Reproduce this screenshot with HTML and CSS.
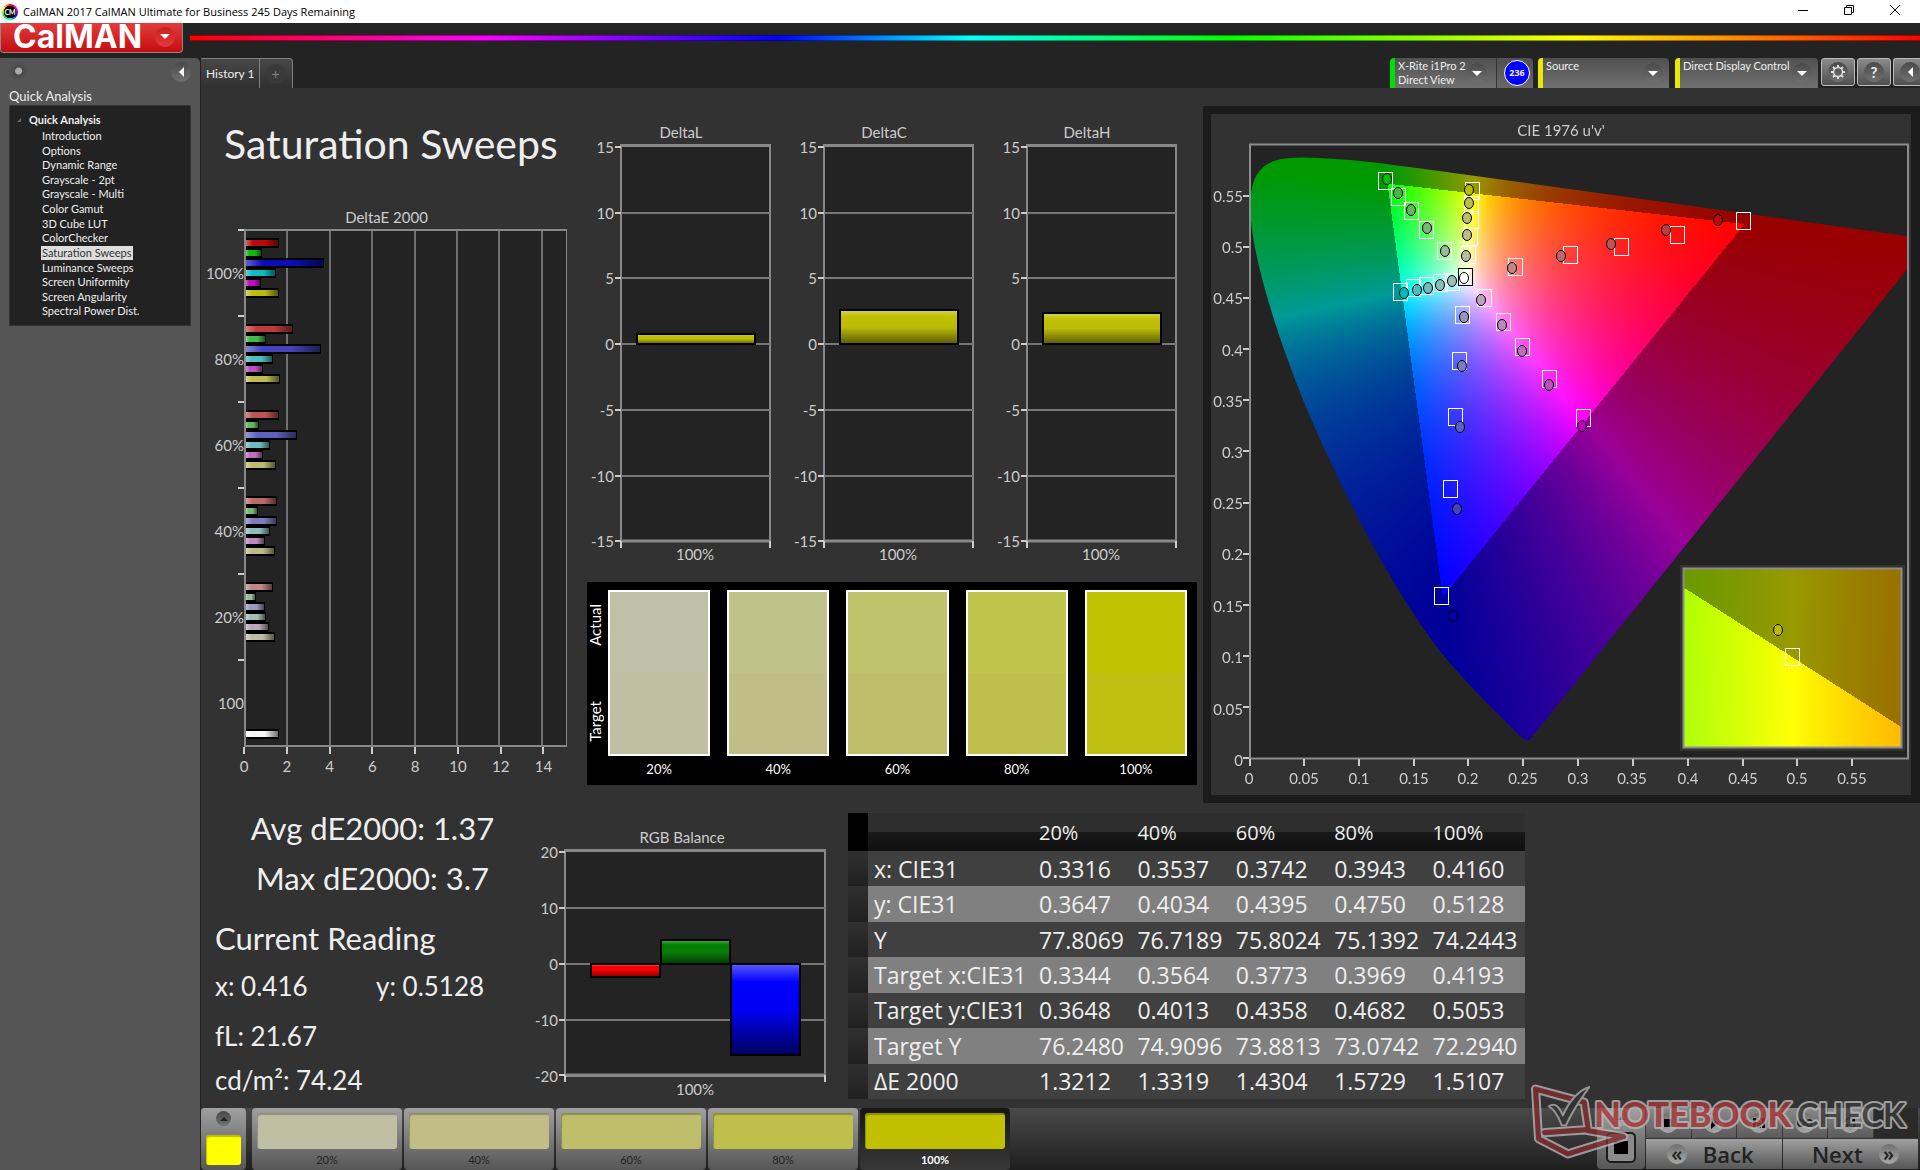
FILE: index.html
```html
<!DOCTYPE html>
<html lang="en">
<head>
<meta charset="utf-8">
<meta name="viewport" content="width=device-width, initial-scale=1">
<title>CalMAN 2017 CalMAN Ultimate for Business</title>
<link rel="stylesheet" href="styles.css">
</head>
<body>
<header class="titlebar">
  <span class="app-icon">CM</span>
  <span class="app-name">CalMAN 2017 CalMAN Ultimate for Business 245 Days Remaining</span>
  <div class="window-buttons">
    <button type="button" aria-label="Minimize"><svg width="12" height="12" viewBox="0 0 12 12"><path d="M1 6.500h10"/></svg></button>
    <button type="button" aria-label="Restore"><svg width="12" height="12" viewBox="0 0 12 12"><path d="M1.500 3.500h7v7h-7zM3.500 3.500v-2h7v7h-2"/></svg></button>
    <button type="button" aria-label="Close"><svg width="12" height="12" viewBox="0 0 12 12"><path d="M1 1l10 10M11 1L1 11"/></svg></button>
  </div>
</header>

<div class="brandbar">
  <button type="button" class="brand">CalMAN <span class="round"><i class="arrow down"></i></span></button>
  <div class="rainbow"></div>
</div>

<div class="workspace">
  <aside class="sidebar">
    <div class="sidebar-tools">
      <span class="round pin"></span>
      <button type="button" class="round" aria-label="Collapse"><i class="arrow left"></i></button>
    </div>
    <h2>Quick Analysis</h2>
    <nav class="tree">
      <a href="#" class="tree-root">Quick Analysis</a>
      <ul>
        <li><a href="#">Introduction</a></li>
        <li><a href="#">Options</a></li>
        <li><a href="#">Dynamic Range</a></li>
        <li><a href="#">Grayscale - 2pt</a></li>
        <li><a href="#">Grayscale - Multi</a></li>
        <li><a href="#">Color Gamut</a></li>
        <li><a href="#">3D Cube LUT</a></li>
        <li><a href="#">ColorChecker</a></li>
        <li><a href="#" class="current" aria-current="page">Saturation Sweeps</a></li>
        <li><a href="#">Luminance Sweeps</a></li>
        <li><a href="#">Screen Uniformity</a></li>
        <li><a href="#">Screen Angularity</a></li>
        <li><a href="#">Spectral Power Dist.</a></li>
      </ul>
    </nav>
  </aside>

  <main class="main">
    <div class="toolbar">
      <div class="tabs">
        <button type="button" class="tab">History 1</button>
        <button type="button" class="tab add" aria-label="Add history"><span class="round">+</span></button>
      </div>
      <div class="devices">
        <button type="button" class="device meter"><span class="device-name">X-Rite i1Pro 2<br>Direct View</span><span class="round"><i class="arrow down"></i></span></button>
        <span class="meter-count"><b>236</b></span>
        <button type="button" class="device source"><span class="device-name">Source</span><span class="round"><i class="arrow down"></i></span></button>
        <button type="button" class="device display"><span class="device-name">Direct Display Control</span><span class="round"><i class="arrow down"></i></span></button>
        <button type="button" class="tool" aria-label="Settings"><span class="round"><svg width="16" height="16" viewBox="0 0 16 16"><circle cx="8" cy="8" r="4.500" fill="none" stroke="#ddd" stroke-width="1.500"/><path d="M8 1v2.500M8 12.500V15M1 8h2.500M12.500 8H15M3 3l2 2M11 11l2 2M13 3l-2 2M5 11l-2 2" stroke="#ddd" stroke-width="2"/></svg></span></button>
        <button type="button" class="tool" aria-label="Help"><span class="round">?</span></button>
        <button type="button" class="tool last" aria-label="Collapse toolbar"><span class="round"><i class="arrow left"></i></span></button>
      </div>
    </div>

    <div class="content">
      <div class="upper">
        <section class="sweep">
          <h1>Saturation Sweeps</h1>
          <h3>DeltaE 2000</h3>
          <div class="de-chart">
            <div class="de-labels"><span>100%</span><span>80%</span><span>60%</span><span>40%</span><span>20%</span><span>100</span></div>
            <div class="de-plot">
              <div class="group"><i class="r100" style="--v:1.55"></i><i class="g100" style="--v:.75"></i><i class="b100" style="--v:3.7"></i><i class="c100" style="--v:1.4"></i><i class="m100" style="--v:.7"></i><i class="y100" style="--v:1.55"></i></div>
              <div class="group"><i class="r80" style="--v:2.2"></i><i class="g80" style="--v:.95"></i><i class="b80" style="--v:3.56"></i><i class="c80" style="--v:1.27"></i><i class="m80" style="--v:.8"></i><i class="y80" style="--v:1.6"></i></div>
              <div class="group"><i class="r60" style="--v:1.55"></i><i class="g60" style="--v:.6"></i><i class="b60" style="--v:2.4"></i><i class="c60" style="--v:1.13"></i><i class="m60" style="--v:.8"></i><i class="y60" style="--v:1.43"></i></div>
              <div class="group"><i class="r40" style="--v:1.46"></i><i class="g40" style="--v:.55"></i><i class="b40" style="--v:1.46"></i><i class="c40" style="--v:1.13"></i><i class="m40" style="--v:.9"></i><i class="y40" style="--v:1.36"></i></div>
              <div class="group"><i class="r20" style="--v:1.27"></i><i class="g20" style="--v:.47"></i><i class="b20" style="--v:.9"></i><i class="c20" style="--v:.95"></i><i class="m20" style="--v:1.08"></i><i class="y20" style="--v:1.36"></i></div>
              <div class="group end"><i class="white" style="--v:1.55"></i></div>
            </div>
            <div class="de-axis"><span>0</span><span>2</span><span>4</span><span>6</span><span>8</span><span>10</span><span>12</span><span>14</span></div>
          </div>
        </section>

        <section class="middle">
          <div class="deltas">
            <svg class="chart" viewBox="0 0 203 450" role="img" aria-label="DeltaL">
              <defs>
                <linearGradient id="yellow" x2="0" y2="1"><stop offset="0" stop-color="#d2d25a"/><stop offset=".2" stop-color="#c0c000"/><stop offset=".5" stop-color="#bcbc0a"/><stop offset="1" stop-color="#5a5a00"/></linearGradient>
                <linearGradient id="red" x2="0" y2="1"><stop offset="0" stop-color="#ff5050"/><stop offset=".2" stop-color="#f00"/><stop offset=".5" stop-color="#f00000"/><stop offset="1" stop-color="#800000"/></linearGradient>
                <linearGradient id="green" x2="0" y2="1"><stop offset="0" stop-color="#50a850"/><stop offset=".2" stop-color="#008000"/><stop offset=".5" stop-color="#0a7c0a"/><stop offset="1" stop-color="#003c00"/></linearGradient>
                <linearGradient id="blue" x2="0" y2="1"><stop offset="0" stop-color="#5a5aff"/><stop offset=".2" stop-color="#00f"/><stop offset=".5" stop-color="#0000f4"/><stop offset="1" stop-color="#000060"/></linearGradient>
                <g id="delta-frame">
                  <path class="plot" d="M41 25h149v396h-149z"/>
                  <path class="grid" d="M41 93h149M41 158h149M41 224h149M41 290h149M41 356h149"/>
                  <path class="band" d="M40 25.500h151M40 421h151"/>
                  <path class="tick" d="M35 27h6M35 93h6M35 158h6M35 224h6M35 290h6M35 356h6M35 421h6M41 421v7M190 421v7"/>
                  <g class="ylabel"><text x="34" y="33">15</text><text x="34" y="99">10</text><text x="34" y="164">5</text><text x="34" y="230">0</text><text x="34" y="296">-5</text><text x="34" y="362">-10</text><text x="34" y="427">-15</text></g>
                  <text class="label" x="115" y="440">100%</text>
                </g>
              </defs>
              <text class="label" x="101" y="18">DeltaL</text>
              <use href="#delta-frame"/>
              <rect class="bar" x="57" y="214" width="118" height="10" fill="url(#yellow)"/>
            </svg>
            <svg class="chart" viewBox="0 0 203 450" role="img" aria-label="DeltaC">
              <text class="label" x="101" y="18">DeltaC</text>
              <use href="#delta-frame"/>
              <rect class="bar" x="57" y="190" width="118" height="34" fill="url(#yellow)"/>
            </svg>
            <svg class="chart" viewBox="0 0 203 450" role="img" aria-label="DeltaH">
              <text class="label" x="101" y="18">DeltaH</text>
              <use href="#delta-frame"/>
              <rect class="bar" x="57" y="193" width="118" height="31" fill="url(#yellow)"/>
            </svg>
          </div>
          <div class="compare">
            <div class="compare-sides"><span>Actual</span><span>Target</span></div>
            <figure><div class="pair p20"></div><figcaption>20%</figcaption></figure>
            <figure><div class="pair p40"></div><figcaption>40%</figcaption></figure>
            <figure><div class="pair p60"></div><figcaption>60%</figcaption></figure>
            <figure><div class="pair p80"></div><figcaption>80%</figcaption></figure>
            <figure><div class="pair p100"></div><figcaption>100%</figcaption></figure>
          </div>
        </section>

        <section class="cie">
          <canvas id="gamut" width="700" height="681"></canvas>
          <svg class="chart" viewBox="0 0 700 681" role="img" aria-label="CIE 1976 u'v' diagram">
            <defs><rect id="sq" x="-6.500" y="-8.500" width="14" height="17"/><ellipse id="dot" rx="4.500" ry="5.500"/></defs>
            <text class="label" x="350" y="22">CIE 1976 u'v'</text>
            <path class="frame" d="M39 30.500h658v614h-658z"/>
            <path class="tick" d="M39 645v7M93 645v7M148 645v7M203 645v7M257 645v7M312 645v7M367 645v7M422 645v7M477 645v7M532 645v7M586 645v7M641 645v7M32 644h6M32 593h6M32 542h6M32 491h6M32 440h6M32 389h6M32 337h6M32 286h6M32 235h6M32 184h6M32 133h6M32 82h6"/>
            <g class="label"><text x="38" y="670">0</text><text x="93" y="670">0.05</text><text x="148" y="670">0.1</text><text x="203" y="670">0.15</text><text x="257" y="670">0.2</text><text x="312" y="670">0.25</text><text x="367" y="670">0.3</text><text x="421" y="670">0.35</text><text x="477" y="670">0.4</text><text x="532" y="670">0.45</text><text x="586" y="670">0.5</text><text x="641" y="670">0.55</text></g>
            <g class="ylabel"><text x="32" y="652">0</text><text x="32" y="601">0.05</text><text x="32" y="549">0.1</text><text x="32" y="498">0.15</text><text x="32" y="446">0.2</text><text x="32" y="395">0.25</text><text x="32" y="344">0.3</text><text x="32" y="293">0.35</text><text x="32" y="242">0.4</text><text x="32" y="190">0.45</text><text x="32" y="139">0.5</text><text x="32" y="88">0.55</text></g>
            <g class="targets">
              <use href="#sq" x="174" y="67"/><use href="#sq" x="187" y="83"/><use href="#sq" x="200" y="97"/><use href="#sq" x="215" y="116"/><use href="#sq" x="233" y="137"/>
              <use href="#sq" x="261" y="77"/><use href="#sq" x="260" y="91"/><use href="#sq" x="260" y="106"/><use href="#sq" x="259" y="123"/><use href="#sq" x="257" y="141"/>
              <use href="#sq" x="189" y="178"/><use href="#sq" x="202" y="174"/><use href="#sq" x="215" y="172"/><use href="#sq" x="229" y="169"/><use href="#sq" x="241" y="168"/>
              <use href="#sq" x="273" y="184"/><use href="#sq" x="292" y="208"/><use href="#sq" x="311" y="233"/><use href="#sq" x="338" y="265"/><use href="#sq" x="372" y="304"/>
              <use href="#sq" x="251" y="201"/><use href="#sq" x="248" y="247"/><use href="#sq" x="244" y="303"/><use href="#sq" x="239" y="375"/><use href="#sq" x="230" y="482"/>
              <use href="#sq" x="304" y="153"/><use href="#sq" x="359" y="141"/><use href="#sq" x="410" y="133"/><use href="#sq" x="466" y="121"/><use href="#sq" x="532" y="107"/>
              <use href="#sq" x="254" y="163" class="white-target"/>
            </g>
            <g class="readings">
              <use href="#dot" x="176" y="65" class="g100"/><use href="#dot" x="187" y="79" class="g80"/><use href="#dot" x="200" y="96" class="g60"/><use href="#dot" x="216" y="114" class="g40"/><use href="#dot" x="234" y="137" class="g20"/>
              <use href="#dot" x="258" y="76" class="y100"/><use href="#dot" x="258" y="89" class="y80"/><use href="#dot" x="256" y="104" class="y60"/><use href="#dot" x="256" y="121" class="y40"/><use href="#dot" x="255" y="142" class="y20"/>
              <use href="#dot" x="193" y="179" class="c100"/><use href="#dot" x="206" y="176" class="c80"/><use href="#dot" x="217" y="174" class="c60"/><use href="#dot" x="229" y="171" class="c40"/><use href="#dot" x="241" y="167" class="c20"/>
              <use href="#dot" x="371" y="312" class="m100"/><use href="#dot" x="338" y="271" class="m80"/><use href="#dot" x="311" y="237" class="m60"/><use href="#dot" x="291" y="211" class="m40"/><use href="#dot" x="270" y="186" class="m20"/>
              <use href="#dot" x="242" y="502" class="b100"/><use href="#dot" x="246" y="395" class="b80"/><use href="#dot" x="249" y="313" class="b60"/><use href="#dot" x="251" y="252" class="b40"/><use href="#dot" x="253" y="203" class="b20"/>
              <use href="#dot" x="507" y="106" class="r100"/><use href="#dot" x="455" y="116" class="r80"/><use href="#dot" x="400" y="130" class="r60"/><use href="#dot" x="350" y="142" class="r40"/><use href="#dot" x="301" y="154" class="r20"/>
              <use href="#dot" x="253" y="164" class="white"/><use href="#dot" x="567" y="516" class="y100"/>
            </g>
            <path class="frame" d="M472.500 454.500h218v179h-218z"/>
            <g class="targets"><use href="#sq" x="581" y="543"/></g>
          </svg>
        </section>
      </div>

      <div class="lower">
        <section class="stats">
          <p class="big center">Avg dE2000: 1.37</p>
          <p class="big center">Max dE2000: 3.7</p>
          <h2 class="big">Current Reading</h2>
          <p class="xy"><span>x: 0.416</span><span>y: 0.5128</span></p>
          <p class="gap">fL: 21.67</p>
          <p>cd/m²: 74.24</p>
        </section>
        <svg class="chart rgb" viewBox="0 0 318 280" role="img" aria-label="RGB Balance">
          <text class="label" x="152" y="18">RGB Balance</text>
          <path class="plot" d="M35 25h260v226h-260z"/>
          <path class="grid" d="M35 83h260M35 139h260M35 195h260"/>
          <path class="band" d="M34 25.500h262M34 250h262"/>
          <path class="tick" d="M29 27h6M29 83h6M29 139h6M29 195h6M29 250h6M35 250v7M295 250v7"/>
          <g class="ylabel"><text x="28" y="33">20</text><text x="28" y="89">10</text><text x="28" y="145">0</text><text x="28" y="201">-10</text><text x="28" y="257">-20</text></g>
          <rect class="bar" x="61" y="139" width="69" height="13" fill="url(#red)"/>
          <rect class="bar" x="131" y="115" width="69" height="24" fill="url(#green)"/>
          <rect class="bar" x="201" y="139" width="69" height="91" fill="url(#blue)"/>
          <text class="label" x="165" y="270">100%</text>
        </svg>
        <table class="data">
          <thead><tr><th class="handle"></th><th class="name"></th><th>20%</th><th>40%</th><th>60%</th><th>80%</th><th>100%</th></tr></thead>
          <tbody>
            <tr><td class="handle"></td><th>x: CIE31</th><td>0.3316</td><td>0.3537</td><td>0.3742</td><td>0.3943</td><td>0.4160</td></tr>
            <tr><td class="handle"></td><th>y: CIE31</th><td>0.3647</td><td>0.4034</td><td>0.4395</td><td>0.4750</td><td>0.5128</td></tr>
            <tr><td class="handle"></td><th>Y</th><td>77.8069</td><td>76.7189</td><td>75.8024</td><td>75.1392</td><td>74.2443</td></tr>
            <tr><td class="handle"></td><th>Target x:CIE31</th><td>0.3344</td><td>0.3564</td><td>0.3773</td><td>0.3969</td><td>0.4193</td></tr>
            <tr><td class="handle"></td><th>Target y:CIE31</th><td>0.3648</td><td>0.4013</td><td>0.4358</td><td>0.4682</td><td>0.5053</td></tr>
            <tr><td class="handle"></td><th>Target Y</th><td>76.2480</td><td>74.9096</td><td>73.8813</td><td>73.0742</td><td>72.2940</td></tr>
            <tr><td class="handle"></td><th>ΔE 2000</th><td>1.3212</td><td>1.3319</td><td>1.4304</td><td>1.5729</td><td>1.5107</td></tr>
          </tbody>
        </table>
      </div>
    </div>

    <footer class="footer">
      <button type="button" class="current-color" aria-label="Current color"><span class="round"><i class="arrow up"></i></span><span class="chip"></span></button>
      <div class="levels">
        <button type="button" class="level"><span class="chip l20"></span>20%</button>
        <button type="button" class="level"><span class="chip l40"></span>40%</button>
        <button type="button" class="level"><span class="chip l60"></span>60%</button>
        <button type="button" class="level"><span class="chip l80"></span>80%</button>
        <button type="button" class="level active"><span class="chip l100"></span>100%</button>
      </div>
      <div class="transport">
        <button type="button" class="stop" aria-label="Stop"><span class="round"><i class="arrow up"></i></span><svg width="30" height="32" viewBox="0 0 30 32"><rect x="1" y="1" width="28" height="29" rx="4" fill="#8a8a8a" stroke="#1c1c1c" stroke-width="2"/><rect x="8" y="9" width="14" height="13" fill="#000"/></svg></button>
        <div class="steps">
          <button type="button" aria-label="Halt"><span class="round"><svg width="18" height="18" viewBox="0 0 18 18"><path d="M5 5h8v8h-8z"/></svg></span></button>
          <button type="button" aria-label="Play"><span class="round"><svg width="18" height="18" viewBox="0 0 18 18"><path d="M6 3l7 6-7 6z"/></svg></span></button>
          <button type="button" aria-label="Save"><span class="round"><svg width="18" height="18" viewBox="0 0 18 18"><path d="M3 4h3v10H3zM12 4h3v10h-3zM7 9h4v5H7z"/></svg></span></button>
          <button type="button" aria-label="Loop"><span class="round"><svg width="18" height="18" viewBox="0 0 18 18"><path d="M5 6a3 3 0 1 0 0 6c3 0 5-6 8-6a3 3 0 1 1 0 6c-3 0-5-6-8-6z" fill="none" stroke="#222" stroke-width="2"/></svg></span></button>
          <button type="button" aria-label="Refresh"><span class="round"><svg width="18" height="18" viewBox="0 0 18 18"><path d="M4 8a5 5 0 0 1 9-2M14 10a5 5 0 0 1-9 2" fill="none" stroke="#222" stroke-width="2"/><path d="M14 3v5h-5zM4 15v-5h5z"/></svg></span></button>
          <span class="blank"></span>
        </div>
        <div class="pages">
          <button type="button"><span class="round">«</span>Back</button>
          <button type="button">Next<span class="round">»</span></button>
        </div>
      </div>
      <svg class="watermark" viewBox="0 0 384 76" role="img" aria-label="Notebookcheck">
        <g stroke-linejoin="round" stroke-linecap="round">
          <path d="M5 6L53 19L57 46L14 49M5 6L8 55L37 70L92 53L56 47" fill="none" stroke="#b4b4b4" stroke-width="9"/>
          <path d="M5 6L53 19L57 46L14 49M5 6L8 55L37 70L92 53L56 47" fill="none" stroke="#842c30" stroke-width="5"/>
          <path d="M18 23c6-4 10 0 14 9C38 18 48 7 58 4C48 18 40 30 35 42h-4c-3-8-7-16-13-19z" fill="#333" stroke="#aaa" stroke-width="2"/>
        </g>
        <text x="63" y="43" class="nb">NOTEBOOK</text>
        <text x="263" y="43" class="ck">CHECK</text>
      </svg>
    </footer>
  </main>
</div>
<script src="gamut.js"></script>
</body>
</html>
```
FILE: styles.css
```css
* { box-sizing: border-box; }

body {
  margin: 0;
  min-height: 100vh;
  display: flex;
  flex-direction: column;
  background: #232323;
  color: #eee;
  font-family: Lato, "Open Sans", sans-serif;
}

h1, h2, h3, p, figure, ul { margin: 0; padding: 0; font-weight: 400; }
ul { list-style: none; }
a { color: inherit; text-decoration: none; }
button { margin: 0; padding: 0; border: 0; background: none; color: inherit; font: inherit; }

/* Shared bits */
.round {
  display: flex;
  align-items: center;
  justify-content: center;
  width: 20px;
  height: 20px;
  flex: none;
  border-radius: 50%;
  background: linear-gradient(#4a4a4a, #707070);
}
.arrow { width: 0; height: 0; border: 5px solid transparent; }
.arrow.down { border-top-color: #fff; border-bottom-width: 0; }
.arrow.up { border-width: 4px; border-bottom-color: #222; border-top-width: 0; }
.arrow.left { border-right-color: #fff; border-left-width: 0; }

/* Title bar */
.titlebar {
  display: flex;
  align-items: center;
  height: 23px;
  padding-left: 2px;
  background: #fff;
  color: #000;
  font: 12px "Open Sans", sans-serif;
}
.app-icon {
  width: 16px;
  height: 16px;
  margin-right: 5px;
  border-radius: 50%;
  background: radial-gradient(circle, #000 55%, transparent 57%), conic-gradient(red, #f0f, #00f, #0ff, #0f0, #ff0, red);
  color: #fff;
  font: 700 7px/16px Lato, sans-serif;
  text-align: center;
}
.app-name { font-size: 11px; }
.window-buttons { display: flex; margin-left: auto; padding: 0 2px 3px 0; }
.window-buttons button { width: 46px; }
.window-buttons svg { display: block; margin: auto; fill: none; stroke: #000; }

/* Brand bar */
.brandbar { display: flex; height: 35px; }
.brand {
  display: flex;
  align-items: center;
  justify-content: space-between;
  width: 183px;
  height: 30px;
  padding: 0 7px 2px 12px;
  border: 1px solid #888;
  border-top: 0;
  border-radius: 0 0 4px 4px;
  background: linear-gradient(#e23c3c, #c40c10);
  color: #fff;
  font: 700 32px/28px Inter, sans-serif;
}
.brand .round { background: linear-gradient(#c62020, #e83838); }
.rainbow {
  flex: 1;
  height: 6px;
  margin: 12px 0 0 7px;
  background: linear-gradient(90deg, #f00, #f0f 17%, #00f 34%, #0ff 45%, #0f0 60%, #ff0 80%, #ff8000 90%, #f00);
  border: solid rgba(0, 0, 0, .4);
  border-width: 1px 0;
}

.workspace { flex: 1; display: flex; }

/* Sidebar */
.sidebar { width: 200px; flex: none; padding: 0 9px; border-radius: 0 5px 0 0; background: #555; }
.sidebar-tools { display: flex; justify-content: space-between; padding-top: 4px; }
.pin { background: radial-gradient(circle at 48% 45%, #aaa 3px, #4a4a4a 4px, #5e5e5e); }
.sidebar h2 { padding-top: 5px; font-size: 13px; line-height: 18px; }
.tree {
  padding: 7px 0 6px 19px;
  border: 1px solid #333;
  background: #222;
  font-size: 11px;
}
.tree-root { display: block; position: relative; height: 16px; font-weight: 700; line-height: 14px; }
.tree-root::before {
  content: "";
  position: absolute;
  left: -12px;
  top: 5px;
  border: 2px solid transparent;
  border-right-color: #666;
  border-bottom-color: #666;
}
.tree ul { display: grid; grid-auto-rows: 1fr; height: 190px; padding-left: 12px; }
.tree li { line-height: 14px; }
.tree li a { display: inline-block; padding: 0 1px; }
.tree .current { background: #ddd; color: #333; }

/* Toolbar */
.main { flex: 1; min-width: 0; display: flex; flex-direction: column; border-left: 1px solid #222; }
.toolbar { display: flex; justify-content: space-between; height: 30px; font-size: 12px; }
.tabs { display: flex; }
.tab { padding: 0 4px 0 5px; border: solid #808080; border-width: 1px 1px 0 0; background: linear-gradient(#484848, #303030); }
.tab.add { display: flex; align-items: center; padding: 0 6px; border-radius: 0 4px 0 0; color: #888; font-size: 14px; }
.tab.add .round { background: #3a3a3a; }
.devices { display: flex; font-size: 11px; }
.device {
  display: flex;
  justify-content: space-between;
  width: 131px;
  padding: 0 6px 0 3px;
  border-left: 5px solid #e8e800;
  border-radius: 4px 4px 0 0;
  background: linear-gradient(#505050, #707070);
  line-height: 14px;
  text-align: left;
}
.device-name { padding-top: 1px; }
.device .round { margin-top: 5px; }
.meter { width: 107px; padding-right: 9px; border-left-color: #00e000; border-right: 1px solid #333; border-top-right-radius: 0; }
.meter-count {
  display: flex;
  align-items: center;
  justify-content: center;
  width: 36px;
  margin-right: 5px;
  padding-left: 4px;
  border-radius: 0 4px 0 0;
  background: linear-gradient(#505050, #686868);
}
.meter-count b { width: 26px; border: 1px solid #fff; border-radius: 50%; background: #00f; font: 700 9px/24px "Open Sans", sans-serif; text-align: center; }
.source { margin-right: 6px; }
.display { width: 143px; margin-right: 3px; }
.tool {
  width: 34px;
  height: 28px;
  margin-right: 2px;
  padding: 0 6px;
  border: 1px solid #bbb;
  border-radius: 3px;
  background: linear-gradient(#8a8a8a, #505050);
  font: 700 15px Lato, sans-serif;
}
.tool.last { width: 27px; margin: 0; border-right: 0; border-radius: 3px 0 0 3px; }

/* Content */
.content { flex: 1; padding-top: 18px; background: #323232; }
.upper { display: grid; grid-template-columns: 379fr 623fr 717fr; }
.sweep h1 { padding-left: 23px; font-size: 41px; line-height: 76px; white-space: nowrap; }
.sweep h3 { padding: 25px 8px 0 0; color: #ccc; font-size: 15px; line-height: 20px; text-align: center; }

.de-chart {
  display: grid;
  grid-template-columns: 43px 1fr;
  grid-template-rows: 518px auto;
  padding: 2px 13px 0 0;
  color: #ccc;
  font-size: 15px;
}
.de-labels { display: grid; grid-auto-rows: 86px; }
.de-labels span { background: linear-gradient(#ccc, #ccc) right top / 6px 2px no-repeat; line-height: 88px; height: 86px; text-align: right; }
.de-plot {
  display: grid;
  grid-auto-rows: 86px;
  border: 2px solid #888;
  border-right-width: 1px;
  background: repeating-linear-gradient(90deg, transparent 0 calc(100% * 2 / 15.1 - 2px), #707070 0 calc(100% * 2 / 15.1)) #232323;
}
.group { padding-top: 7px; display: flex; flex-direction: column; align-items: flex-start; }
.group.end { padding-top: 68px; }
.group i {
  width: calc(var(--v) / 15.1 * 100%);
  height: 10px;
  border: solid #000;
  border-width: 2px 1px 2px 0;
  background-image: linear-gradient(90deg, rgba(255, 255, 255, .35), transparent 22%, transparent 60%, rgba(0, 0, 0, .55));
}
.de-axis { grid-column: 2; display: flex; }
.de-axis span { flex: none; width: calc(100% * 2 / 15.1); margin-left: calc(100% / -15.1); margin-right: calc(100% / 15.1); line-height: 24px; text-align: center; }
.de-axis span::before { content: ""; display: block; width: 2px; height: 7px; margin: 0 auto; background: #ccc; }

.r100 { background-color: #b80c0c; fill: #b80c0c; } .r80 { background-color: #c03c3c; fill: #c03c3c; } .r60 { background-color: #c05454; fill: #c05454; } .r40 { background-color: #bc6868; fill: #bc6868; } .r20 { background-color: #bc8888; fill: #bc8888; }
.g100 { background-color: #10b810; fill: #00c000; } .g80 { background-color: #48b848; fill: #48b848; } .g60 { background-color: #60b860; fill: #60b860; } .g40 { background-color: #78b878; fill: #78b878; } .g20 { background-color: #98bc98; fill: #98bc98; }
.b100 { background-color: #0c0cb8; fill: #0000b0; } .b80 { background-color: #4444bc; fill: #4444bc; } .b60 { background-color: #6060c0; fill: #6060c0; } .b40 { background-color: #7c7cbc; fill: #7c7cbc; } .b20 { background-color: #9898bc; fill: #9898bc; }
.c100 { background-color: #10bcbc; fill: #00bcbc; } .c80 { background-color: #50bcbc; fill: #50bcbc; } .c60 { background-color: #70bcbc; fill: #70bcbc; } .c40 { background-color: #8cbcbc; fill: #8cbcbc; } .c20 { background-color: #a4bcb8; fill: #a4bcb8; }
.m100 { background-color: #bc10bc; fill: #bc00bc; } .m80 { background-color: #bc50bc; fill: #bc50bc; } .m60 { background-color: #bc70bc; fill: #bc70bc; } .m40 { background-color: #bc88bc; fill: #bc88bc; } .m20 { background-color: #bca4bc; fill: #bca4bc; }
.y100 { background-color: #bcbc10; fill: #bcbc00; } .y80 { background-color: #bcbc50; fill: #bcbc50; } .y60 { background-color: #bcbc70; fill: #bcbc70; } .y40 { background-color: #bcbc88; fill: #bcbc88; } .y20 { background-color: #bcbca4; fill: #bcbca4; }
.white { background-color: #f4f4f4; fill: #fff; }

/* SVG charts */
.chart { display: block; width: 100%; font-size: 15px; fill: #ccc; }
.chart .label { text-anchor: middle; }
.chart .ylabel { text-anchor: end; }
.plot { fill: #232323; stroke: #888; stroke-width: 2; }
.grid { fill: none; stroke: #777; stroke-width: 2; }
.band { fill: none; stroke: #888; stroke-width: 3; }
.tick { fill: none; stroke: #ccc; stroke-width: 2; }
.frame { fill: none; stroke: #8c8c8c; stroke-width: 2; }
.bar { stroke: #000; stroke-width: 2; }

.middle { padding-top: 14px; }
.deltas { display: grid; grid-template-columns: repeat(3, 1fr); padding-right: 14px; }

.compare {
  display: grid;
  grid-template-columns: 4px repeat(5, 1fr);
  column-gap: 17px;
  margin: 12px 6px 0 7px;
  padding: 8px 10px 0 0;
  height: 203px;
  background: #000;
  color: #fff;
}
.compare-sides { display: flex; width: 17px; height: 166px; padding: 14px 0; flex-direction: column; justify-content: space-between; font-size: 15px; line-height: 17px; }
.compare-sides span { writing-mode: vertical-rl; transform: rotate(180deg); }
.pair { height: 166px; border: 2px solid #fff; }
.compare figcaption { font-size: 13px; line-height: 27px; text-align: center; }
.p20 { background: linear-gradient(#bec1a5 50%, #bfbfa4 50%); }
.p40 { background: linear-gradient(#bfc289 50%, #c0be86 50%); }
.p60 { background: linear-gradient(#bfc36b 50%, #bfbe6b 50%); }
.p80 { background: linear-gradient(#bec54a 50%, #bfc04c 50%); }
.p100 { background: linear-gradient(#bec200 50%, #c0c012 50%); }

/* Gamut diagram: drawing surface and markers share one grid cell */
.cie { display: grid; align-content: start; border: 8px solid #1b1b1b; border-right-width: 9px; }
.cie > * { grid-area: 1 / 1; width: 100%; }
.targets { fill: none; stroke: #fff; stroke-width: 1; }
.white-target { stroke: #000; }
.readings { stroke: #000; stroke-width: 1; }

/* Lower row */
.lower { display: grid; grid-template-columns: 329fr 318fr 677fr 395fr; align-items: start; }
.stats { padding: 0 0 0 14px; font-size: 26px; line-height: 44px; white-space: nowrap; }
.big { font-size: 31px; line-height: 50px; }
.center { text-align: center; }
.stats h2 { padding-top: 10px; }
.xy { display: grid; grid-template-columns: 161px 1fr; padding-top: 1px; }
.gap { padding-top: 6px; }
.rgb { margin-top: 22px; }

.data {
  width: 100%;
  height: 286px;
  margin-top: 10px;
  border-collapse: collapse;
  table-layout: fixed;
  font: 23px "Open Sans", sans-serif;
}
.data th, .data td { height: 35px; padding: 0 0 0 6px; font-weight: 400; line-height: 32px; text-align: left; white-space: nowrap; }
.data tbody tr { background: #404040; }
.data tbody tr:nth-child(even) { background: #808080; }
.data thead tr { background: linear-gradient(#2e2e2e 50%, #191919 50%, #101010); }
.data thead th { height: 38px; padding-top: 2px; font-size: 20px; font-weight: 500; }
.data .handle { width: 20px; padding: 0; background: linear-gradient(#303030, #202020); }
.data thead .handle { background: #000; }
.data .name { width: 165px; }

/* Footer */
.footer { position: relative; display: flex; height: 62px; padding-right: 2px; background: linear-gradient(#4a4a4a, #1e1e1e); }
.chip { display: block; border-radius: 3px; box-shadow: inset 1px 2px 1px rgba(0, 0, 0, .25); }
.current-color, .level, .transport button { background: linear-gradient(#a0a0a0, #565656); }
.current-color { width: 45px; margin-right: 6px; padding: 0 5px 2px; border-radius: 4px; }
.current-color .round { width: 15px; height: 15px; margin: 0 auto 9px; }
.current-color .chip { height: 30px; background: #ff0; }
.levels { display: flex; gap: 2px; }
.level { width: 150px; padding: 5px 5px 0; border-radius: 4px; color: #222; font-size: 11px; line-height: 22px; }
.level .chip { height: 36px; }
.level.active { background: linear-gradient(#161616, #383838); color: #fff; font-weight: 700; }
.l20 { background: #bfbfa4; } .l40 { background: #c0be86; } .l60 { background: #bfbe6b; } .l80 { background: #bfc04c; } .l100 { background: #c0c000; }

.transport {
  display: grid;
  grid-template: 30px 30px / 48px 272px;
  gap: 1px;
  margin-left: auto;
}
.transport .stop { grid-row: 1 / 3; display: flex; flex-direction: column; align-items: center; gap: 6px; padding-top: 2px; border-radius: 4px; }
.stop .round { width: 16px; height: 16px; }
.steps { display: grid; grid-template-columns: repeat(6, 1fr); gap: 1px; }
.steps button { display: flex; align-items: center; justify-content: center; background: linear-gradient(#8a8a8a, #5a5a5a); }
.blank { background: #2a2a2a; }
.transport .round { background: linear-gradient(#707070, #a8a8a8); }
.pages { display: grid; grid-template-columns: 1fr 1fr; gap: 1px; color: #222; font: 600 22px "Open Sans", sans-serif; }
.pages button { display: flex; align-items: center; justify-content: center; gap: 16px; padding: 0 7px 1px 0; line-height: 28px; }
.pages button:last-child { padding: 0 0 1px 10px; }
.pages .round { font-size: 20px; line-height: 16px; }

/* Site mark lies over the footer controls */
.watermark { position: absolute; right: 0; bottom: 10px; width: 390px; height: 77px; opacity: .8; }
.watermark text { paint-order: stroke; stroke: #b8b8b8; stroke-width: 4px; stroke-linejoin: round; font: 900 34px Lato, sans-serif; }
.watermark .nb { fill: #a8383c; }
.watermark .ck { fill: #3a3a3a; font-size: 32px; font-weight: 700; }
```
FILE: gamut.js
```js
// Paints the CIE 1976 u'v' chromaticity diagram and its magnified inset.
const canvas = document.getElementById('gamut');
const ctx = canvas.getContext('2d');

// Spectral locus, CIE 1931 x,y from 380 to 700 nm.
const locus = [
  [.1741, .0050], [.1733, .0048], [.1714, .0051], [.1689, .0069], [.1644, .0109], [.1566, .0177],
  [.1440, .0297], [.1355, .0399], [.1241, .0578], [.1096, .0868], [.0913, .1327], [.0687, .2007],
  [.0454, .2950], [.0235, .4127], [.0082, .5384], [.0039, .6548], [.0139, .7502], [.0389, .8120],
  [.0743, .8338], [.1142, .8262], [.1547, .8059], [.2296, .7543], [.3016, .6923], [.3731, .6245],
  [.4441, .5547], [.5125, .4866], [.5752, .4242], [.6270, .3725], [.6658, .3340], [.6915, .3083],
  [.7190, .2809], [.7347, .2653]
];

function colorAt(u, v) {
  const d = 6 * u - 16 * v + 12;
  const x = 9 * u / d, y = 4 * v / d, z = 1 - x - y;
  const rgb = [
    3.2406 * x - 1.5372 * y - 0.4986 * z,
    -0.9689 * x + 1.8758 * y + 0.0415 * z,
    0.0557 * x - 0.2040 * y + 1.0570 * z
  ];
  const level = Math.min(...rgb) < 0 ? 153 : 255;
  const max = Math.max(...rgb);
  return rgb.map(c => level * Math.max(c, 0) / max);
}

function paint(w, h, toUV) {
  const layer = document.createElement('canvas');
  layer.width = w;
  layer.height = h;
  const lctx = layer.getContext('2d');
  const img = lctx.createImageData(w, h);
  for (let j = 0, k = 0; j < h; j++) {
    for (let i = 0; i < w; i++, k += 4) {
      const [r, g, b] = colorAt(...toUV(i, j));
      img.data[k] = r;
      img.data[k + 1] = g;
      img.data[k + 2] = b;
      img.data[k + 3] = 255;
    }
  }
  lctx.putImageData(img, 0, 0);
  return layer;
}

const plot = { x: 39, y: 31, w: 658, h: 613, su: 1096, sv: 1022 };
ctx.fillStyle = '#232323';
ctx.fillRect(plot.x, plot.y, plot.w, plot.h);

ctx.save();
ctx.beginPath();
ctx.rect(plot.x, plot.y, plot.w, plot.h);
ctx.clip();
ctx.beginPath();
// Curve through the midpoints of a slightly widened locus keeps the green corner round.
const points = locus.map(([x, y]) => {
  const d = -2 * x + 12 * y + 3;
  return [plot.x + 4 * x / d * plot.su - 2, plot.y + plot.h - 9 * y / d * plot.sv - 1];
});
ctx.moveTo(...points[0]);
for (let i = 1; i < points.length - 1; i++) {
  const [ax, ay] = points[i], [bx, by] = points[i + 1];
  ctx.quadraticCurveTo(ax, ay, (ax + bx) / 2, (ay + by) / 2);
}
ctx.lineTo(...points[points.length - 1]);
ctx.closePath();
ctx.clip();
ctx.drawImage(paint(plot.w, plot.h, (i, j) => [i / plot.su, (plot.h - j) / plot.sv]), plot.x, plot.y);
ctx.restore();

// Inset centred on the 100% yellow target.
ctx.fillStyle = '#323232';
ctx.fillRect(469, 451, 225, 186);
ctx.drawImage(paint(219, 180, (i, j) => [.2039 + (i - 109) / 5400, .5529 - (j - 89) / 28500]), 472, 454);
```
